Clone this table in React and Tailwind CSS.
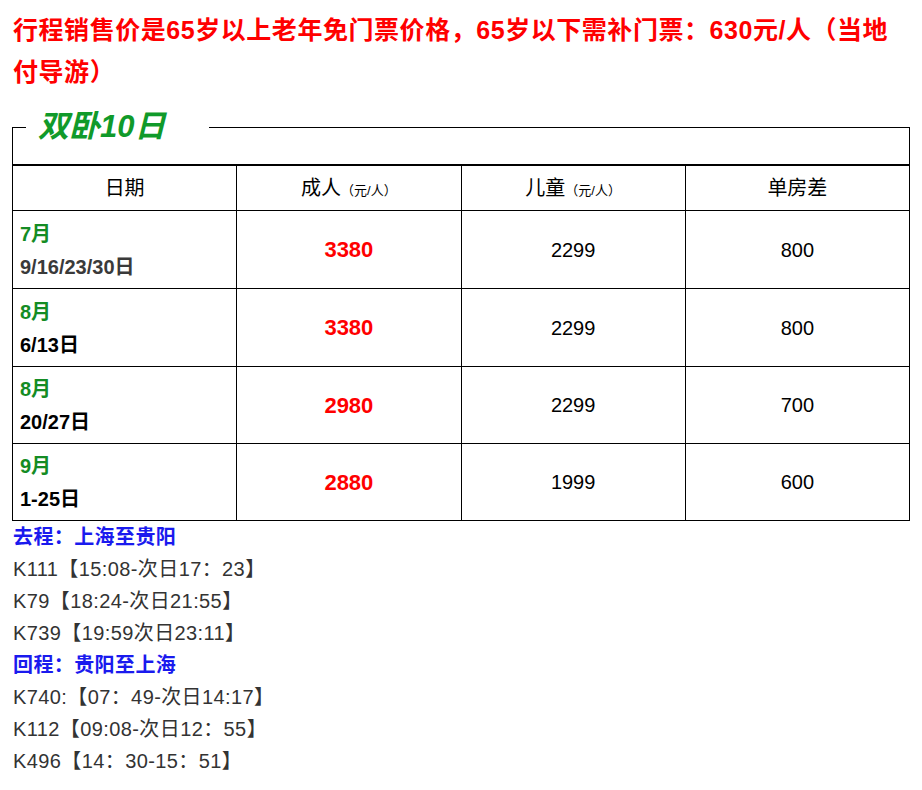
import React from "react";

const rows = [
  { month: "7月", days: "9/16/23/30日", dayColor: "text-[#3a3a3a]", adult: "3380", child: "2299", single: "800", h: "h-[78px]" },
  { month: "8月", days: "6/13日", dayColor: "text-black", adult: "3380", child: "2299", single: "800", h: "h-[78px]" },
  { month: "8月", days: "20/27日", dayColor: "text-black", adult: "2980", child: "2299", single: "700", h: "h-[77px]" },
  { month: "9月", days: "1-25日", dayColor: "text-black", adult: "2880", child: "1999", single: "600", h: "h-[77px]" },
];

const trains = [
  { head: "去程：上海至贵阳" },
  { text: "K111【15:08-次日17：23】" },
  { text: "K79【18:24-次日21:55】" },
  { text: "K739【19:59次日23:11】" },
  { head: "回程：贵阳至上海" },
  { text: "K740:【07：49-次日14:17】" },
  { text: "K112【09:08-次日12：55】" },
  { text: "K496【14：30-15：51】" },
];

const App = () => {
  return (
    <div className="w-[922px] min-h-[790px] bg-white px-[12px] pt-[9px] font-['Liberation_Sans','Noto_Sans_CJK_SC',sans-serif]">
      {/* Notice */}
      <div className="pl-[1px] text-[25px] leading-[42px] font-bold text-[#ff0000] tracking-[0.55px]">
        <span className="whitespace-nowrap">行程销售价是65岁以上老年免门票价格，65岁以下需补门票：630元/人（当地</span>
        <br />
        付导游）
      </div>

      {/* Title box */}
      <fieldset className="mt-[14px] border border-black">
        <legend className="ml-[13px] w-[183px] pl-[12px] text-[31px] leading-[40px] font-bold italic text-[#109a2a]">
          双卧10日
        </legend>
        <div className="h-[17px]" />
      </fieldset>

      {/* Price table */}
      <table className="w-full table-fixed border-collapse border border-black text-black">
        <thead>
          <tr className="h-[45px] text-[20px]">
            <th className="border border-black font-normal">日期</th>
            <th className="border border-black font-normal">
              成人<span className="text-[13px]">（元/人）</span>
            </th>
            <th className="border border-black font-normal">
              儿童<span className="text-[13px]">（元/人）</span>
            </th>
            <th className="border border-black font-normal">单房差</th>
          </tr>
        </thead>
        <tbody>
          {rows.map((r, i) => (
            <tr key={i} className={r.h}>
              <td className="border border-black pl-[7px] text-[20px] leading-[33px] font-bold">
                <div className="pt-[2px] text-[#148c24]">{r.month}</div>
                <div className={r.dayColor}>{r.days}</div>
              </td>
              <td className="border border-black text-center text-[22px] font-bold text-[#ff0000]">{r.adult}</td>
              <td className="border border-black text-center text-[20px]">{r.child}</td>
              <td className="border border-black text-center text-[20px]">{r.single}</td>
            </tr>
          ))}
        </tbody>
      </table>

      {/* Trains */}
      <div className="pl-[1px] text-[20px] leading-[32px] tracking-[0.4px] text-[#333]">
        {trains.map((t, i) =>
          t.head ? (
            <div key={i} className="font-bold text-[#1a1aee]">{t.head}</div>
          ) : (
            <div key={i}>{t.text}</div>
          )
        )}
      </div>
    </div>
  );
};

export default App;
